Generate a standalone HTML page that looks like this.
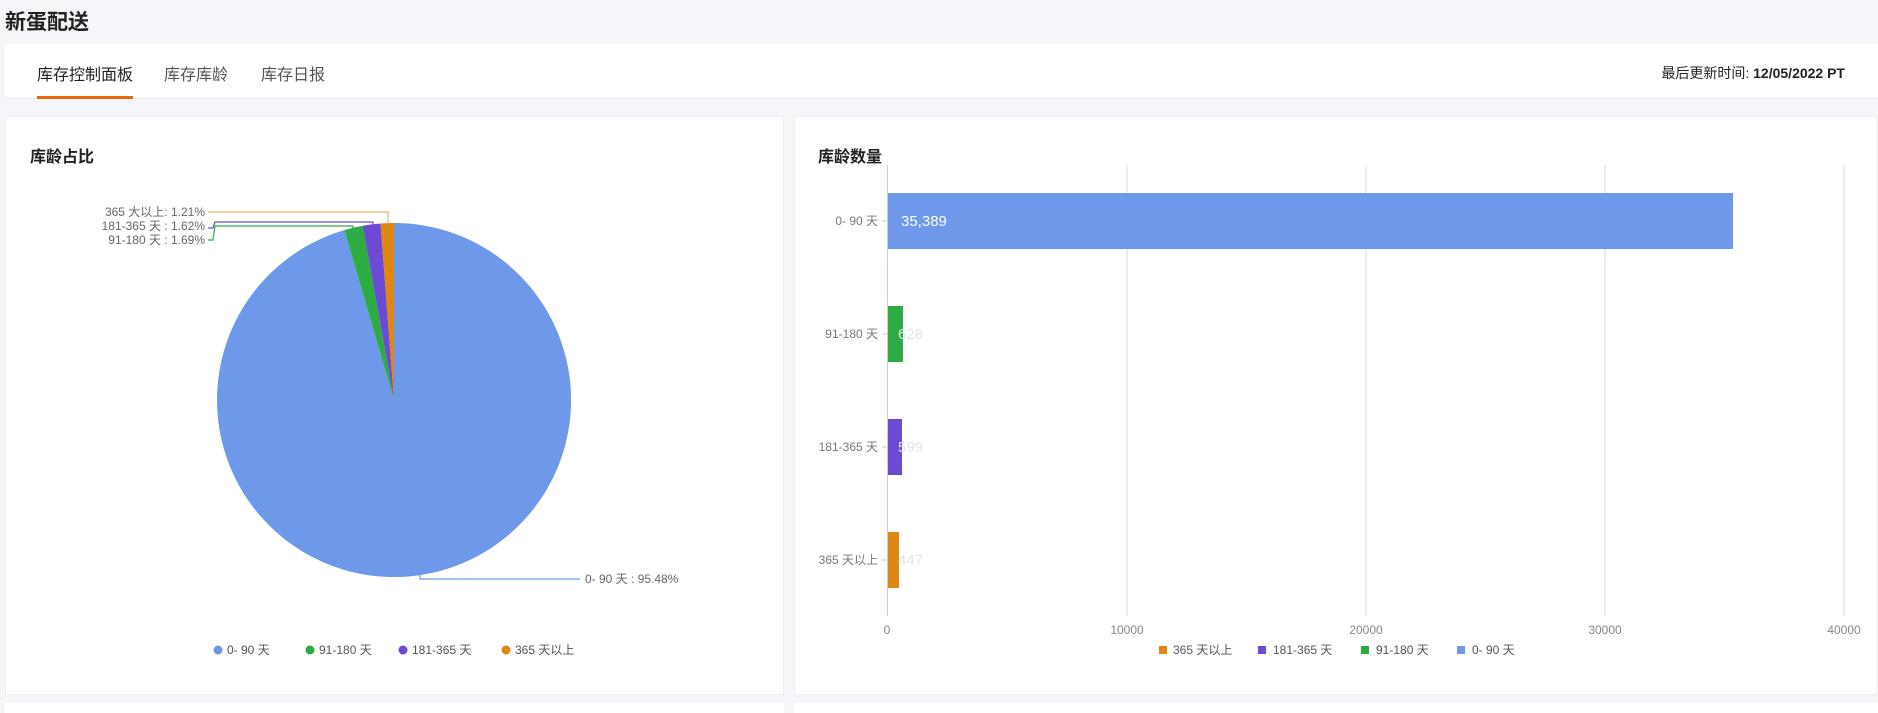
<!DOCTYPE html>
<html><head><meta charset="utf-8"><style>
html,body{margin:0;padding:0;width:1878px;height:707px;overflow:hidden;background:#f5f6fa;font-family:"Liberation Sans","Noto Sans CJK SC",sans-serif;}
.abs{position:absolute;}
</style></head><body>
<div class="abs" style="left:5px;top:6px;font-size:21px;font-weight:bold;color:#222;">新蛋配送</div>
<div class="abs" style="left:5px;top:44px;width:1873px;height:54px;background:#fff;border-bottom:1px solid #e8e8ec;"></div>
<div class="abs" style="left:37px;top:61px;font-size:16px;color:#222;">库存控制面板</div>
<div class="abs" style="left:37px;top:96px;width:96px;height:3px;background:#e8670c;"></div>
<div class="abs" style="left:164px;top:61px;font-size:16px;color:#555;">库存库龄</div>
<div class="abs" style="left:261px;top:61px;font-size:16px;color:#555;">库存日报</div>
<div class="abs" style="right:33px;top:63px;font-size:14px;color:#222;">最后更新时间: <b>12/05/2022 PT</b></div>
<div class="abs" style="left:5px;top:116px;width:779px;height:579px;background:#fff;border:1px solid #eceef2;box-sizing:border-box;"></div>
<div class="abs" style="left:794px;top:116px;width:1084px;height:579px;background:#fff;border:1px solid #eceef2;box-sizing:border-box;"></div>
<div class="abs" style="left:5px;top:703px;width:779px;height:10px;background:#fff;"></div>
<div class="abs" style="left:794px;top:703px;width:1084px;height:10px;background:#fff;"></div>
<div class="abs" style="left:30px;top:143px;font-size:16px;font-weight:bold;color:#222;">库龄占比</div>
<div class="abs" style="left:818px;top:143px;font-size:16px;font-weight:bold;color:#222;">库龄数量</div>
<svg class="abs" style="left:0;top:0" width="1878" height="707" font-family="Liberation Sans, Noto Sans CJK SC, sans-serif">
<path d="M394 400 L394 223 A177 177 0 1 1 344.4 230.1 Z" fill="#6e99ea"/>
<path d="M394 400 L344.4 230.1 A177 177 0 0 1 362.7 225.8 Z" fill="#2eac44"/>
<path d="M394 400 L362.7 225.8 A177 177 0 0 1 380.5 223.5 Z" fill="#6c4ad4"/>
<path d="M394 400 L380.5 223.5 A177 177 0 0 1 394 223 Z" fill="#de8712"/>
<g fill="none" stroke-width="1.2">
<polyline points="388,224 388,212 208,212" stroke="#e8b070"/>
<polyline points="373,225 373,222 215,222 213,228 208,228" stroke="#6c4ad4"/>
<polyline points="353,229 353,226 215,226 213,240 208,240" stroke="#2eac44"/>
<polyline points="420,572 420,579 580,579" stroke="#6e99ea"/>
</g>
<g font-size="12" fill="#666" text-anchor="end">
<text x="205" y="216">365 大以上: 1.21%</text>
<text x="205" y="230">181-365 天 : 1.62%</text>
<text x="205" y="244">91-180 天 : 1.69%</text>
</g>
<text x="585" y="583" font-size="12" fill="#666">0- 90 天 : 95.48%</text>
<g font-size="12" fill="#555">
<circle cx="218" cy="650" r="4.5" fill="#6e99ea"/><text x="227" y="654">0- 90 天</text>
<circle cx="310" cy="650" r="4.5" fill="#2eac44"/><text x="319" y="654">91-180 天</text>
<circle cx="403" cy="650" r="4.5" fill="#6c4ad4"/><text x="412" y="654">181-365 天</text>
<circle cx="506" cy="650" r="4.5" fill="#de8712"/><text x="515" y="654">365 天以上</text>
</g>
<g stroke="#e6e6e6" stroke-width="1.5">
<line x1="1127" y1="165" x2="1127" y2="616"/><line x1="1366" y1="165" x2="1366" y2="616"/>
<line x1="1605" y1="165" x2="1605" y2="616"/><line x1="1844" y1="165" x2="1844" y2="616"/>
</g>
<line x1="887.5" y1="165" x2="887.5" y2="616" stroke="#ccc" stroke-width="1"/>
<g stroke="#ccc"><line x1="882" y1="221" x2="887" y2="221"/><line x1="882" y1="334" x2="887" y2="334"/><line x1="882" y1="447" x2="887" y2="447"/><line x1="882" y1="560" x2="887" y2="560"/></g>
<rect x="888" y="193" width="845" height="56" fill="#6e99ea"/>
<rect x="888" y="306" width="15" height="56" fill="#2eac44"/>
<rect x="888" y="419" width="14" height="56" fill="#6c4ad4"/>
<rect x="888" y="532" width="11" height="56" fill="#de8712"/>
<text x="901" y="226" font-size="15" fill="#fff">35,389</text>
<g font-size="15" fill="#e4e4e4"><text x="898" y="339">628</text><text x="898" y="452">599</text><text x="898" y="565">447</text></g>
<g font-size="12" fill="#777" text-anchor="end">
<text x="878" y="225">0- 90 天</text><text x="878" y="338">91-180 天</text><text x="878" y="451">181-365 天</text><text x="878" y="564">365 天以上</text>
</g>
<g font-size="12" fill="#888" text-anchor="middle">
<text x="887" y="634">0</text><text x="1127" y="634">10000</text><text x="1366" y="634">20000</text><text x="1605" y="634">30000</text><text x="1844" y="634">40000</text>
</g>
<g font-size="12" fill="#555">
<rect x="1159" y="646" width="8" height="8" fill="#de8712"/><text x="1173" y="654">365 天以上</text>
<rect x="1258" y="646" width="8" height="8" fill="#6c4ad4"/><text x="1273" y="654">181-365 天</text>
<rect x="1361" y="646" width="8" height="8" fill="#2eac44"/><text x="1376" y="654">91-180 天</text>
<rect x="1457" y="646" width="8" height="8" fill="#6e99ea"/><text x="1472" y="654">0- 90 天</text>
</g>
</svg>
</body></html>
